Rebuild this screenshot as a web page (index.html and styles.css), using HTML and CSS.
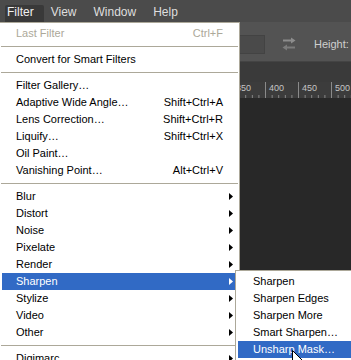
FILE: index.html
```html
<!DOCTYPE html>
<html lang="en">
<head>
    <meta charset="UTF-8">
    <meta name="viewport" content="width=device-width, initial-scale=1.0">
    <title>Filter menu</title>
    <link rel="stylesheet" href="styles.css">
</head>
<body>
    <div class="app">
        <div class="menubar">
            <div class="menu-title open">Filter</div>
            <div class="menu-title">View</div>
            <div class="menu-title">Window</div>
            <div class="menu-title">Help</div>
        </div>

        <div class="options">
            <div class="field"></div>
            <svg class="swap" width="14" height="14" viewBox="0 0 14 14">
                <path d="M1 3.5H9.5" stroke="#8d8d8d" stroke-width="2"/>
                <polygon points="9,0.5 13.5,3.5 9,6.5" fill="#8d8d8d"/>
                <path d="M4.5 10.5H13" stroke="#7c7c7c" stroke-width="2"/>
                <polygon points="5,7.5 0.5,10.5 5,13.5" fill="#7c7c7c"/>
            </svg>
            <span class="label">Height:</span>
            <div class="field small"></div>
        </div>

        <div class="tabstrip"></div>

        <div class="ruler">
            <div class="tick">350</div>
            <div class="tick">400</div>
            <div class="tick">450</div>
            <div class="tick">500</div>
        </div>

        <div class="canvas"></div>
    </div>

    <div class="menu">
        <div class="item disabled"><span>Last Filter</span><span class="key">Ctrl+F</span></div>
        <div class="sep"></div>
        <div class="item"><span>Convert for Smart Filters</span></div>
        <div class="sep"></div>
        <div class="item"><span>Filter Gallery…</span></div>
        <div class="item"><span>Adaptive Wide Angle…</span><span class="key">Shift+Ctrl+A</span></div>
        <div class="item"><span>Lens Correction…</span><span class="key">Shift+Ctrl+R</span></div>
        <div class="item"><span>Liquify…</span><span class="key">Shift+Ctrl+X</span></div>
        <div class="item"><span>Oil Paint…</span></div>
        <div class="item"><span>Vanishing Point…</span><span class="key">Alt+Ctrl+V</span></div>
        <div class="sep"></div>
        <div class="item"><span>Blur</span><i class="arrow"></i></div>
        <div class="item"><span>Distort</span><i class="arrow"></i></div>
        <div class="item"><span>Noise</span><i class="arrow"></i></div>
        <div class="item"><span>Pixelate</span><i class="arrow"></i></div>
        <div class="item"><span>Render</span><i class="arrow"></i></div>
        <div class="item active"><span>Sharpen</span><i class="arrow"></i></div>
        <div class="item"><span>Stylize</span><i class="arrow"></i></div>
        <div class="item"><span>Video</span><i class="arrow"></i></div>
        <div class="item"><span>Other</span><i class="arrow"></i></div>
        <div class="sep"></div>
        <div class="item"><span>Digimarc</span><i class="arrow"></i></div>
    </div>

    <div class="menu submenu">
        <div class="item"><span>Sharpen</span></div>
        <div class="item"><span>Sharpen Edges</span></div>
        <div class="item"><span>Sharpen More</span></div>
        <div class="item"><span>Smart Sharpen…</span></div>
        <div class="item active"><span>Unsharp Mask…</span></div>
    </div>

    <svg class="cursor" width="13" height="20" viewBox="0 0 13 20">
        <path d="M0.5 0.5V16.5L4.5 12.5L7.5 19.5L9.5 18.5L6.5 11.5H11.5Z" fill="#fff" stroke="#000" stroke-width="1" stroke-linejoin="miter"/>
    </svg>
</body>
</html>
```

FILE: styles.css
```css
body {
    margin: 0;
    width: 351px;
    height: 360px;
    overflow: hidden;
    position: relative;
    background: #282828;
    font-family: "Liberation Sans", Arial, sans-serif;
}

.app {
    display: flex;
    flex-direction: column;
    height: 100%;
}

/* top menu bar */
.menubar {
    height: 22px;
    background: #4b4b4b;
    display: flex;
    align-items: flex-end;
    gap: 5px;
    padding-left: 5px;
    box-sizing: border-box;
}

.menu-title {
    height: 17px;
    line-height: 15px;
    padding: 0 10px 0 2px;
    font-size: 12px;
    color: #dedede;
}

.menu-title.open {
    background: #393939;
    border-radius: 2px 2px 0 0;
    color: #f0f0f0;
}

/* options bar */
.options {
    height: 40px;
    background: #535353;
    border-bottom: 1px solid #444;
    box-sizing: border-box;
    display: flex;
    align-items: flex-start;
    padding: 13px 0 0 180px;
}

.field {
    width: 83px;
    height: 17px;
    background: #4a4a4a;
    border: 1px solid #434343;
    flex-shrink: 0;
}

.field.small {
    width: 40px;
    margin-left: 4px;
}

.swap {
    margin: 2px 0 0 17px;
    flex-shrink: 0;
}

.label {
    margin-left: 18px;
    font-size: 11px;
    line-height: 19px;
    color: #cfcfcf;
    white-space: nowrap;
}

.tabstrip {
    height: 20px;
    background: #3a3a3a;
}

/* ruler */
.ruler {
    height: 16px;
    background: #3c3c3c;
    display: flex;
    padding-left: 232px;
    overflow: hidden;
}

.tick {
    flex: 0 0 33px;
    box-sizing: border-box;
    border-left: 1px solid #8a8a8a;
    padding: 1px 0 0 3px;
    font-size: 9px;
    line-height: 10px;
    color: #c4c4c4;
    background-image: linear-gradient(to right, transparent 5.6px, #8a8a8a 5.6px);
    background-size: 6.6px 3px;
    background-repeat: repeat-x;
    background-position: left bottom;
}

.canvas {
    flex: 1;
    background: #282828;
}

/* dropdown menus */
.menu {
    position: absolute;
    top: 22px;
    left: -1px;
    width: 241px;
    box-sizing: border-box;
    background: #fff;
    border: 1px solid #aca899;
    padding: 2px 0;
    font-size: 11px;
    color: #000;
}

.item {
    height: 17px;
    line-height: 17px;
    margin: 0 2px;
    padding: 0 14px;
    display: flex;
    justify-content: space-between;
    align-items: center;
    white-space: nowrap;
}

.item.disabled {
    color: #aca899;
}

.item.active {
    background: #316ac5;
    color: #fff;
}

.item .arrow {
    width: 4px;
    height: 7px;
    margin-right: -10px;
    background: currentColor;
    clip-path: polygon(0 0, 100% 50%, 0 100%);
}

.sep {
    margin: 4px 1px;
    border-top: 1px solid #aca899;
}

.submenu {
    top: 270px;
    left: 235px;
    width: 140px;
}

.submenu .item {
    padding-left: 15px;
}

.cursor {
    position: absolute;
    left: 292px;
    top: 350px;
}
```
